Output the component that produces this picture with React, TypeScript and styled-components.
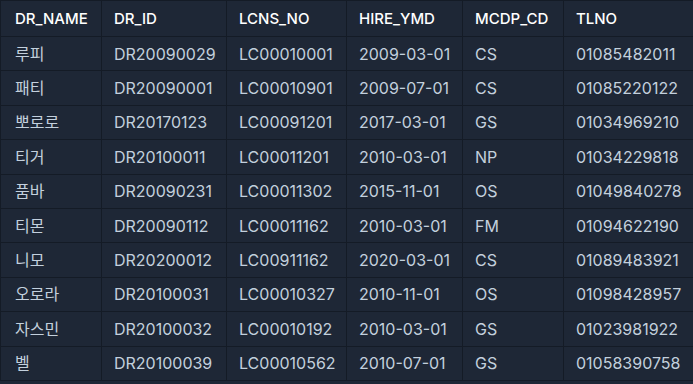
import React from 'react'
import styled, { createGlobalStyle } from 'styled-components'

type Doctor = {
  name: string;
  id: string;
  license: string;
  hired: string;
  dept: string;
  phone: string;
}

const columns = ['DR_NAME', 'DR_ID', 'LCNS_NO', 'HIRE_YMD', 'MCDP_CD', 'TLNO']
const widths = [101, 125, 120, 116, 101, 160]

const doctors: Doctor[] = [
  { name: '루피', id: 'DR20090029', license: 'LC00010001', hired: '2009-03-01', dept: 'CS', phone: '01085482011' },
  { name: '패티', id: 'DR20090001', license: 'LC00010901', hired: '2009-07-01', dept: 'CS', phone: '01085220122' },
  { name: '뽀로로', id: 'DR20170123', license: 'LC00091201', hired: '2017-03-01', dept: 'GS', phone: '01034969210' },
  { name: '티거', id: 'DR20100011', license: 'LC00011201', hired: '2010-03-01', dept: 'NP', phone: '01034229818' },
  { name: '품바', id: 'DR20090231', license: 'LC00011302', hired: '2015-11-01', dept: 'OS', phone: '01049840278' },
  { name: '티몬', id: 'DR20090112', license: 'LC00011162', hired: '2010-03-01', dept: 'FM', phone: '01094622190' },
  { name: '니모', id: 'DR20200012', license: 'LC00911162', hired: '2020-03-01', dept: 'CS', phone: '01089483921' },
  { name: '오로라', id: 'DR20100031', license: 'LC00010327', hired: '2010-11-01', dept: 'OS', phone: '01098428957' },
  { name: '자스민', id: 'DR20100032', license: 'LC00010192', hired: '2010-03-01', dept: 'GS', phone: '01023981922' },
  { name: '벨', id: 'DR20100039', license: 'LC00010562', hired: '2010-07-01', dept: 'GS', phone: '01058390758' },
]

export default function App(): React.ReactElement {
  return (
    <>
      <GlobalStyle />
      <Table>
        <colgroup>
          {widths.map((w, i) => <col key={i} width={w} />)}
        </colgroup>
        <thead>
          <tr>
            {columns.map(c => <Th key={c}>{c}</Th>)}
          </tr>
        </thead>
        <tbody>
          {doctors.map(d => (
            <tr key={d.id}>
              <Td>{d.name}</Td>
              <Td>{d.id}</Td>
              <Td>{d.license}</Td>
              <Td>{d.hired}</Td>
              <Td>{d.dept}</Td>
              <Td>{d.phone}</Td>
            </tr>
          ))}
        </tbody>
      </Table>
    </>
  )
}

const GlobalStyle = createGlobalStyle`
  html, body {
    margin: 0;
    background: #1e2736;
    overflow: hidden;
  }
  body {
    font-family: Inter, "Noto Sans CJK KR", sans-serif;
  }
`
const Table = styled.table`
  border-collapse: collapse;
  table-layout: fixed;
  width: 723px;
  background: #1e2736;
  border: 1px solid #141b26;
  font-size: 16px;
  white-space: nowrap;
`
const Th = styled.th`
  text-align: left;
  font-weight: 500;
  font-size: 15px;
  color: #ffffff;
  padding: 0 12px;
  height: 35px;
  border: 1px solid #141b26;
  &:first-child {
    padding-left: 14px;
  }
`
const Td = styled.td`
  color: #c3d0dd;
  padding: 0 12px;
  height: 33.4px;
  line-height: 20px;
  border: 1px solid #141b26;
  &:first-child {
    padding-left: 14px;
  }
`
